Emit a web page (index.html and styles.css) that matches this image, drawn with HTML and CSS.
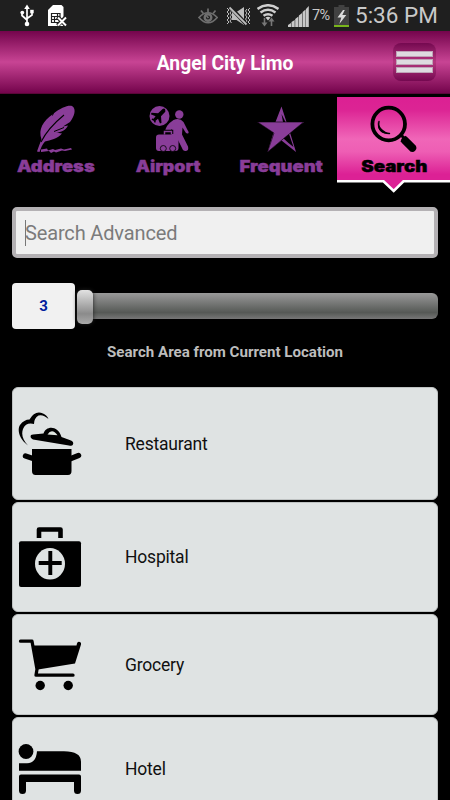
FILE: index.html
```
<!DOCTYPE html>
<html lang="en">
<head>
<meta charset="utf-8">
<title>Angel City Limo</title>
<link rel="stylesheet" href="styles.css">
</head>
<body>
<div class="status">
  <svg class="usb" width="14" height="24" viewBox="20 4 14 24" fill="none" stroke="#fff" stroke-width="1.7"><path d="M27 8v15M22 12.500v3l5 4.500M32 12v3l-5 3.500"/><g fill="#fff" stroke="none"><path d="M27 4.500l2.800 4.500h-5.600z"/><circle cx="27" cy="24" r="2.300"/><circle cx="22.300" cy="12.600" r="1.900"/><path d="M30.200 9.800h3.500v3.500h-3.500z"/></g></svg>
  <svg class="sim" width="20" height="24" viewBox="48 4 20 24"><path d="M53 5h8.500l2 2v19H48V10z" fill="#fff"/><path d="M51.500 13.500h8.500v9h-8.500zM51.500 16.500h8.500M51.500 19.500h8.500M54.500 16.500v6M57.500 13.500v6" fill="none" stroke="#1f1f1f" stroke-width="1.200"/><path d="M57.500 17l8.500 8.500M66 17l-8.500 8.500" stroke="#1f1f1f" stroke-width="4"/><path d="M58 17.500l8 8M66 17.500l-8 8" stroke="#fff" stroke-width="2"/></svg>
  <svg class="eye" width="20" height="18" viewBox="198 7 20 18" fill="none" stroke="#6f6f6f" stroke-width="1.700"><path d="M199 17.500q9-9.500 18.200 0q-9 10.500-18.200 0z"/><path d="M208 8.500v4M201 10.500l2.400 3M215.500 10.500l-2.400 3"/><circle cx="208" cy="17.500" r="3.300" stroke-width="2.400"/><path d="M206.500 16l2 2"/></svg>
  <svg class="mute" width="27" height="20" viewBox="225 6 27 20"><path d="M232 12h4.500l7.500-5v18l-7.500-5H232z" fill="#bdbdbd"/><path d="M227 8l2 2-2 2 2 2-2 2 2 2-2 2 2 2-2 2M230 9l1.500 2-1.500 2 1.500 2-1.500 2 1.500 2-1.500 2 1.500 2M250 8l-2 2 2 2-2 2 2 2-2 2 2 2-2 2 2 2M247 9l-1.500 2 1.500 2-1.500 2 1.500 2-1.500 2 1.500 2-1.500 2" fill="none" stroke="#bdbdbd"/><path d="M230 7l17 18" stroke="#1f1f1f" stroke-width="4"/><path d="M229.500 7.500l17 17" stroke="#bdbdbd" stroke-width="1.800"/></svg>
  <svg class="wifi" width="22" height="24" viewBox="257 4 22 24" fill="none" stroke="#cfcfcf" stroke-width="2.500"><path d="M257.500 9q10.500-7.500 21 0M260.500 12.500q7.500-5.500 15 0M263.500 15.800q4.500-3.200 9 0"/><path d="M265.500 17.500q2.500-1.500 5 0l-2.500 3z" fill="#cfcfcf" stroke="none"/><path d="M264.500 18v6M271.500 26v-6" stroke="#777" stroke-width="1.600"/><path d="M261.500 22.500h6l-3 4zM268.500 21.500h6l-3-4z" fill="#777" stroke="none"/></svg>
  <svg class="signal" width="21" height="22" viewBox="288 5 21 22" fill="#c9c9c9"><path d="M288 27v-2l3-2v4zM291.500 27v-5l3.200-2v7zM295.200 27v-8l3.200-2.500v10.500zM298.900 27v-11.500l3.200-2.500v14zM302.600 27v-15l3-2.500v17.500zM306 27v-18l2.800-3v21z"/></svg>
  <span class="percent">7%</span>
  <svg class="battery" width="15" height="23" viewBox="334 5 15 23"><path d="M338.500 5h6v2h4.500v18h-15V7h4.500z" fill="#414141"/><path d="M343 10l-5.500 7.500h3.800l-2 6.500 7-9h-4l2.500-5z" fill="#ddd"/><path d="M334 25h15v2h-15z" fill="#79b51c"/></svg>
  <span class="clock">5:36 PM</span>
</div>
<header class="header">
  <h1>Angel City Limo</h1>
  <div class="menu"><i></i><i></i><i></i></div>
</header>
<nav class="tabs">
  <a class="tab">
    <svg width="46" height="50" viewBox="33 104 46 50"><path d="M37 151.500C39 146 40 143 41.500 139.500C38 129 43 121 53 114C61 107.500 68 105 72 106C77 109 74 117 70 122L63 126.500L68 125.500C66 130 61 132.500 56 132.500L62 133.500C58 139 50 140 45 141.500C42 145 41 148 39.500 152Z"/><path d="M41 142Q48 128 64 115" fill="none" stroke="#000" stroke-width="1.100"/><path d="M54 131.500l10-4M52.500 115.500l1-3" stroke="#000" stroke-width="1"/><path d="M41 149.500l6-1 1 2 5-1.500 2 1 6-1.500 3 1 7-1.500 1 1.500-7 1.500-3-.5-6 2-2-1-3 1.500-2-2-8 1z"/></svg>
    <span class="address">Address</span>
  </a>
  <a class="tab">
    <svg width="46" height="50" viewBox="143 104 46 50"><circle cx="156.500" cy="116" r="10"/><path d="M161.300 111l-4.300 4.500.5 6.500-1.500.8-2-4.800-2.400 2 .2 1.500-1.200.4-1-2-2-1 .5-1.200 1.500.2 2-2.400-4.800-2 .8-1.500 6.500.5 4.500-4.300q3-1.500 2.700 2.800z" fill="#000" transform="translate(1 .8)"/><circle cx="176.300" cy="114.500" r="4.200"/><path d="M170.500 120q6-3 10 2l4 8q2 3 .5 3.500-2 .5-3-2l-2.500-4-.5 7 6 12q1 4-2 4.500t-4-3l-4.500-9h-6l.5-10-3 3-4 .5q0-7 8.500-12.500z"/><rect x="153" y="134.500" width="22.500" height="16.500" rx="3"/><path d="M161.500 134v-2.500h7v2.500" fill="none" stroke="#000" stroke-width="3.500"/><path d="M161.500 134.500v-3h7v3" fill="none" stroke="#893d98" stroke-width="1.500"/><circle cx="160.300" cy="148.500" r="3" stroke="#000" stroke-width=".8"/><circle cx="169.700" cy="148.500" r="3" stroke="#000" stroke-width=".8"/></svg>
    <span class="airport">Airport</span>
  </a>
  <a class="tab">
    <svg width="48" height="50" viewBox="257 104 48 50"><path d="M281.500 106.500l5 15.500h17.500l-14 10.500 6 19.500-14.500-11.500-14 11.500 6-19.500-16-10.500h18z"/><path d="M281.500 114l1.500 8h2.500zM283 138l6-4 4.500 13-5-4z" fill="#000"/><path d="M257.500 122h46l-36 30 6.500-19z" stroke="#000" stroke-width=".6"/></svg>
    <span class="frequent">Frequent</span>
  </a>
  <a class="tab active">
    <svg width="48" height="50" viewBox="370 104 48 50"><circle cx="388.700" cy="124" r="16.300" fill="none" stroke="#000" stroke-width="3.800"/><path d="M401 135l3 3" stroke="#000" stroke-width="3"/><path d="M403 138.500l10.500 10.500" stroke="#000" stroke-width="7.500"/><path d="M405 140.500l7.500 7.500" stroke="#000" stroke-width="7.500" stroke-linecap="round"/><path d="M379 121.500q-2 11.500 10.500 12" fill="none" stroke="#000" stroke-width="1.400" stroke-linecap="round"/><path d="M378 121q-2 13 12 13-8-3-11-9z"/></svg>
    <span class="search">Search</span>
    <svg class="pointer" width="113" height="14" viewBox="337 179 113 14"><path d="M337 181h46.500l10.500 10 10.500-10H450v-2H337z" fill="#dc2195"/><path d="M337 181.300h46.500l10.200 9.700 9.800-9.700H450" fill="none" stroke="#fff" stroke-width="2.600"/></svg>
  </a>
</nav>
<main class="content">
  <div class="field"><i class="caret"></i><span>Search Advanced</span></div>
  <div class="range"><b class="value">3</b><div class="track"><i class="thumb"></i></div></div>
  <p class="caption"><span>Search Area from Current Location</span></p>
  <ul class="list">
    <li class="restaurant">
      <svg width="64" height="66" viewBox="18 410 64 66"><path d="M28 444.500C19 438 17 429 20 424Q24 418.500 29.500 418.500Q35 409 43 412.500Q47 414 48.500 418Q43 413 38.500 414.500Q34 417 34 423Q26 421 23 428C21 434 23 439 28 444.500Z"/><path d="M33 433.500L43.500 432.500C46 424.500 58 424 61.500 436L71 439.500Q74 441 73 443.500Q72 445.500 69 444.500L33 438.500Q29.500 436.500 31 434Z"/><path d="M47.500 433.500q4.500-7 10 .8z" fill="#dfe5df"/><path d="M32 448h39.500v22q0 4-3.500 4H35.500q-3.500 0-3.500-4z"/><path d="M33 457.500l-7.500-2.500M71 457.500l7.500-3" stroke="#000" stroke-width="5.500" stroke-linecap="round"/></svg>
      <span>Restaurant</span>
    </li>
    <li class="hospital">
      <svg width="64" height="66" viewBox="18 524 64 66"><path d="M39 538v-8.500h21.500v8.500" fill="none" stroke="#000" stroke-width="4.600" stroke-linejoin="round"/><rect x="19" y="541.300" width="62" height="45.700" rx="2"/><ellipse cx="50" cy="563.800" rx="15" ry="15.700" fill="#dfe3e3"/><path d="M50.300 551v24M38.700 563h23" stroke="#000" stroke-width="3.900"/></svg>
      <span>Hospital</span>
    </li>
    <li class="grocery">
      <svg width="64" height="66" viewBox="18 632 64 66"><path d="M20.500 641.200h11.500l5 28-1 6h37" fill="none" stroke="#000" stroke-width="3.300" stroke-linecap="round" stroke-linejoin="round"/><path d="M33.500 645.500h43L77 643.500q.5-2.500 3-1.500 1.500.7 1 2.500L75 663.500l-37 6z"/><circle cx="40.200" cy="685.500" r="4.700"/><circle cx="68.200" cy="685.500" r="4.700"/></svg>
      <span>Grocery</span>
    </li>
    <li class="hotel">
      <svg width="64" height="66" viewBox="18 735 64 66"><circle cx="26" cy="750.500" r="7.400"/><path d="M37 750.300h27q17 0 17 10.500v9H19v-7.500h8q9 0 10-12zM21 773.500h58q2 0 2 2v14q0 3.500-3.500 3.500t-3.500-3.500V781H26v8.500q0 3.500-3.500 3.500t-3.500-3.500v-14q0-2 2-2z"/></svg>
      <span>Hotel</span>
    </li>
  </ul>
</main>
</body>
</html>
```

FILE: styles.css
```
* { box-sizing: border-box; }
body { margin: 0; width: 450px; height: 800px; overflow: hidden; background: #000; font-family: Roboto, sans-serif; }
svg { display: block; flex: none; }
.status { height: 31px; display: flex; align-items: flex-start; background: #1f1f1f; color: #c9c9c9; white-space: nowrap; }
.usb { margin: 4px 0 0 20px; }
.sim { margin: 4px 0 0 14px; }
.eye { margin: 7px 0 0 130px; }
.mute { margin: 6px 0 0 7px; }
.wifi { margin: 4px 0 0 5px; }
.signal { margin: 5px 0 0 9px; }
.percent { width: 22px; margin: 8px 0 0 3px; font-size: 14.500px; line-height: 16px; letter-spacing: -.7px; }
.battery { margin: 5px 0 0 0; }
.clock { margin: 2px 0 0 6px; font-size: 22.500px; line-height: 27px; }
.header { height: 63px; display: flex; align-items: center; border-bottom: 1px solid #5a0638; background: linear-gradient(#74044c, #c84494 50%, #74044c); }
h1 { flex: 1; margin: 3px 0 0 57px; text-align: center; color: #fff; font-size: 19.300px; line-height: 24px; font-weight: 700; }
.menu { width: 43px; height: 38px; margin: 0 14px 0 0; padding: 8px 3px; display: flex; flex-direction: column; gap: 2px; border-radius: 8px; background: linear-gradient(#740950, #b5367f 50%, #740950); }
.menu i { height: 6px; background: #dedbe0; border: 1px solid #bfa3b7; }
.tabs { height: 113px; display: flex; color: #893d98; fill: #893d98; padding-top: 3px; }
.tab { width: 112.500px; height: 84px; padding-top: 7px; display: flex; flex-direction: column; align-items: center; font: 900 16px/20px Inter, sans-serif; position: relative; white-space: nowrap; }
.tab span { margin-top: 2px; -webkit-text-stroke: .4px currentColor; transform: scaleX(1.15); }
.tab .airport { transform: scaleX(1.11); }
.tab .search { transform: translateX(1px) scaleX(1.17); }
.active { width: 113px; color: #000; fill: #000; background: linear-gradient(#dc2093, #dc2494 15%, #f066b8 50%, #ee5eb4 65%, #dc2195 92%); }
.pointer { position: absolute; left: 0; top: 82px; }
.content { padding: 0 12px; }
.field { height: 51px; display: flex; align-items: center; padding-left: 9px; border: 4px solid #b4b1b4; border-radius: 5px; background: #f0f0f0; color: #7b7b7b; font-size: 20px; letter-spacing: -.15px; }
.caret { width: 1px; height: 26px; margin-right: -1px; background: #777; }
.range { height: 46px; margin-top: 25px; display: flex; align-items: center; gap: 2px; }
.value { width: 63px; height: 46px; border-radius: 4px; background: #f1f1f1; color: #001c9c; text-align: center; font-size: 15px; line-height: 47px; }
.track { flex: 1; height: 26px; display: flex; align-items: center; border-radius: 6px; background: linear-gradient(#999, #565956 75%, #777); }
.thumb { width: 16px; height: 34px; margin-top: 2px; border-radius: 5px; background: linear-gradient(#e2e2e2, #8b8b8b 70%, #aaa); box-shadow: 0 0 4px #222; }
.caption { margin: 14px 0 0; text-align: center; color: #bdbdbd; font-size: 15.100px; line-height: 18px; font-weight: 700; }
.list { list-style: none; margin: 26px 0 0; padding: 0; display: flex; flex-direction: column; gap: 2px; }
.list li { flex: none; display: flex; align-items: center; padding-left: 6px; border: 1px solid #bfc3c3; border-radius: 6px; background: #dfe3e3; color: #101010; font-size: 17.500px; letter-spacing: -.2px; }
.list svg { margin-left: -1px; margin-right: 43px; }
.restaurant { height: 113px; }
.hospital { height: 110px; }
.grocery { height: 101px; }
.hotel { height: 103px; }
```
